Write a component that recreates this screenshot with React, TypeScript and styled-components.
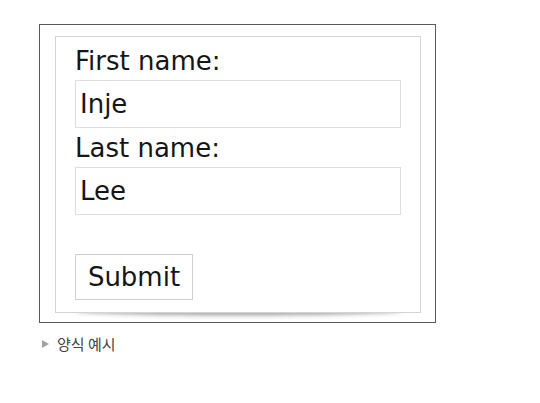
import styled, { createGlobalStyle } from "styled-components";

const GlobalStyle = createGlobalStyle`
  body {
    margin: 0;
    background: #ffffff;
    font-family: "DejaVu Sans", Verdana, sans-serif;
  }
`;

const Page = styled.div`
  padding: 24px 0 0 39px;
  width: 540px;
  height: 403px;
  box-sizing: border-box;
`;

const Frame = styled.div`
  position: relative;
  z-index: 0;
  width: 397px;
  height: 299px;
  box-sizing: border-box;
  border: 1px solid #5a5a5a;
  background: #ffffff;
  padding: 11px 0 0 15px;
`;

const Card = styled.form`
  position: relative;
  width: 366px;
  height: 277px;
  box-sizing: border-box;
  border: 1px solid #d4d4d4;
  background: #ffffff;
  padding: 10px 0 0 19px;
  margin: 0;

  &::after {
    content: "";
    position: absolute;
    left: 5%;
    right: 5%;
    bottom: 2px;
    height: 10px;
    border-radius: 50%;
    box-shadow: 0 5px 5px rgba(0, 0, 0, 0.4);
    z-index: -1;
  }
`;

const Label = styled.label`
  display: block;
  font-size: 26px;
  line-height: 29px;
  color: #161616;
`;

const TextInput = styled.input`
  display: block;
  width: 326px;
  height: 48px;
  box-sizing: border-box;
  margin: 4px 0 6px;
  padding: 0 4px;
  border: 1px solid #dedede;
  outline: none;
  font-family: "DejaVu Sans", Verdana, sans-serif;
  font-size: 26px;
  color: #161616;
  background: #ffffff;
`;

const SubmitButton = styled.button`
  display: block;
  margin-top: 39px;
  width: 118px;
  height: 46px;
  box-sizing: border-box;
  padding: 0;
  border: 1px solid #cfcfcf;
  background: #ffffff;
  font-family: "DejaVu Sans", Verdana, sans-serif;
  font-size: 26px;
  color: #161616;
`;

const Caption = styled.div`
  display: flex;
  align-items: center;
  gap: 8px;
  margin-top: 10px;
  padding-left: 3px;
  font-family: "Noto Sans CJK KR", "Noto Sans", sans-serif;
  font-size: 15px;
  line-height: 22px;
  color: #444444;
`;

const Arrow = styled.span`
  width: 0;
  height: 0;
  border-left: 7px solid #a0a0a0;
  border-top: 4px solid transparent;
  border-bottom: 4px solid transparent;
`;

export default function App() {
  return (
    <Page>
      <GlobalStyle />
      <Frame>
        <Card onSubmit={(e) => e.preventDefault()}>
          <Label htmlFor="fname">First name:</Label>
          <TextInput id="fname" defaultValue="Inje" />
          <Label htmlFor="lname">Last name:</Label>
          <TextInput id="lname" defaultValue="Lee" />
          <SubmitButton type="submit">Submit</SubmitButton>
        </Card>
      </Frame>
      <Caption>
        <Arrow />
        양식 예시
      </Caption>
    </Page>
  );
}
